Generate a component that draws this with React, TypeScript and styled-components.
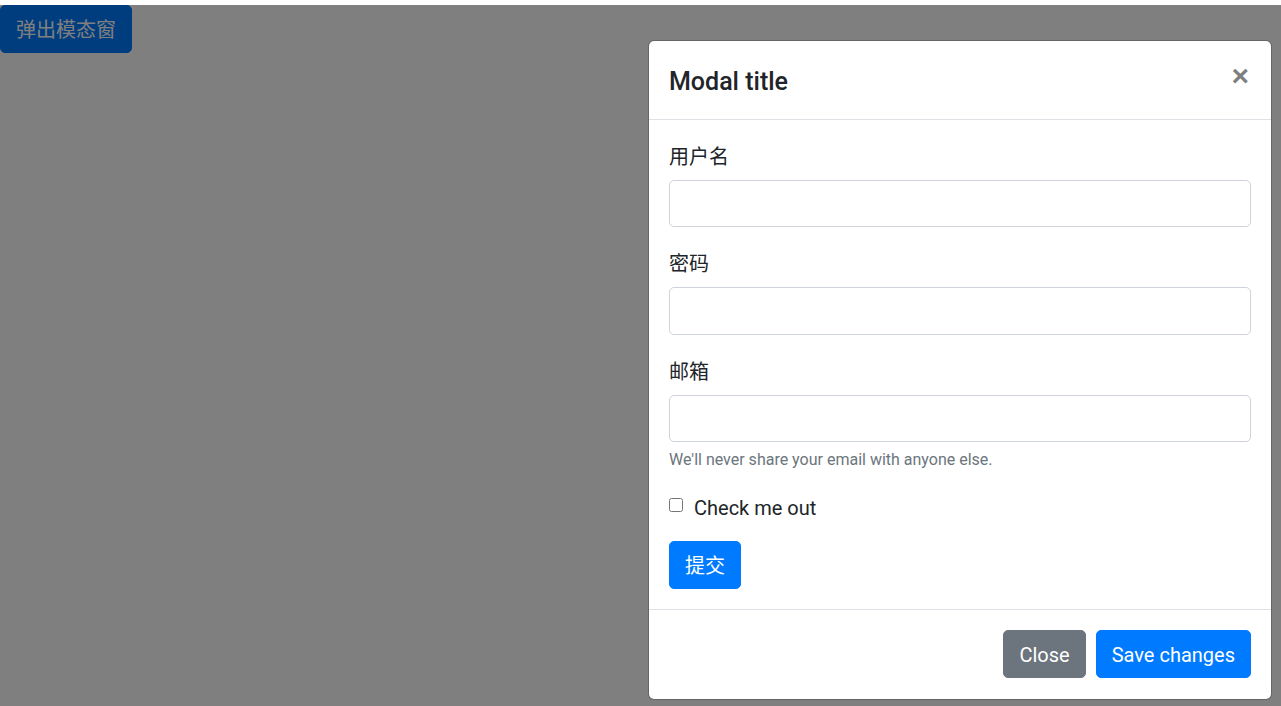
import React from "react";
import styled, { createGlobalStyle } from "styled-components";

const FONT = `Roboto, "Noto Sans CJK SC", sans-serif`;

const Global = createGlobalStyle`
  html, body { margin: 0; padding: 0; background: #fff; }
  body {
    font-family: ${FONT};
    font-size: 20px;
    line-height: 1.5;
    color: #212529;
    overflow: hidden;
  }
  * { box-sizing: border-box; }
`;

const TopStrip = styled.div`
  height: 5px;
  background: #fff;
`;

const Viewport = styled.div`
  position: relative;
  height: 701px;
  background: #fff;
`;

const Btn = styled.button<{ $variant?: "primary" | "secondary" }>`
  display: inline-block;
  font-family: ${FONT};
  font-size: 20px;
  line-height: 1.5;
  font-weight: 400;
  padding: 9px 15px 7px;
  border-radius: 5px;
  border: 1px solid ${(p) => (p.$variant === "secondary" ? "#6c757d" : "#007bff")};
  background: ${(p) => (p.$variant === "secondary" ? "#6c757d" : "#007bff")};
  color: #fff;
  cursor: pointer;
`;

const Backdrop = styled.div`
  position: absolute;
  inset: 0;
  background: rgba(0, 0, 0, 0.5);
`;

const DialogLayer = styled.div`
  position: absolute;
  inset: 0;
  display: flex;
  justify-content: flex-end;
  align-items: flex-start;
  padding: 35px 9px 0 0;
`;

const Modal = styled.div`
  width: 624px;
  background: #fff;
  border: 1px solid rgba(0, 0, 0, 0.2);
  border-radius: 6px;
  display: flex;
  flex-direction: column;
  background-clip: padding-box;
`;

const Header = styled.div`
  display: flex;
  align-items: flex-start;
  justify-content: space-between;
  padding: 22px 20px 18px;
  border-bottom: 1px solid #dee2e6;
`;

const Title = styled.h5`
  margin: 0;
  font-size: 25px;
  font-weight: 500;
  line-height: 1.5;
  color: #212529;
`;

const CloseX = styled.button`
  background: transparent;
  border: 0;
  padding: 20px 22px 20px 20px;
  margin: -22px -20px -20px auto;
  font-family: "Liberation Sans", sans-serif;
  font-size: 30px;
  font-weight: 700;
  line-height: 1;
  color: #000;
  opacity: 0.5;
  cursor: pointer;
`;

const Body = styled.div`
  padding: 20px;
`;

const Group = styled.div`
  margin-bottom: 20px;
`;

const Label = styled.label`
  display: block;
  padding-top: 2px;
  margin-bottom: 8px;
`;

const Input = styled.input`
  display: block;
  width: 100%;
  height: 47.5px;
  padding: 7.5px 15px;
  font-size: 20px;
  border: 1px solid #ced4da;
  border-radius: 5px;
  background: #fff;
  outline: none;
`;

const Help = styled.small`
  display: block;
  margin-top: 5px;
  padding-top: 1px;
  margin-bottom: -1px;
  font-size: 16px;
  line-height: 1.5;
  color: #6c757d;
`;

const Check = styled.div`
  position: relative;
  padding-left: 25px;
  padding-top: 2px;
  margin-bottom: 18px;
`;

const CheckBox = styled.input`
  position: absolute;
  left: 0;
  top: 7px;
  width: 14px;
  height: 14px;
  margin: 0;
`;

const Footer = styled.div`
  display: flex;
  justify-content: flex-end;
  align-items: center;
  gap: 10px;
  padding: 20px 20px 21px;
  border-top: 1px solid #dee2e6;
`;

export default function App() {
  return (
    <>
      <Global />
      <TopStrip />
      <Viewport>
        <Btn>弹出模态窗</Btn>
        <Backdrop />
        <DialogLayer>
          <Modal>
            <Header>
              <Title>Modal title</Title>
              <CloseX aria-label="Close">×</CloseX>
            </Header>
            <Body>
              <Group>
                <Label>用户名</Label>
                <Input type="text" />
              </Group>
              <Group>
                <Label>密码</Label>
                <Input type="password" />
              </Group>
              <Group>
                <Label>邮箱</Label>
                <Input type="email" />
                <Help>We'll never share your email with anyone else.</Help>
              </Group>
              <Check>
                <CheckBox type="checkbox" />
                <label>Check me out</label>
              </Check>
              <Btn>提交</Btn>
            </Body>
            <Footer>
              <Btn $variant="secondary">Close</Btn>
              <Btn>Save changes</Btn>
            </Footer>
          </Modal>
        </DialogLayer>
      </Viewport>
    </>
  );
}
